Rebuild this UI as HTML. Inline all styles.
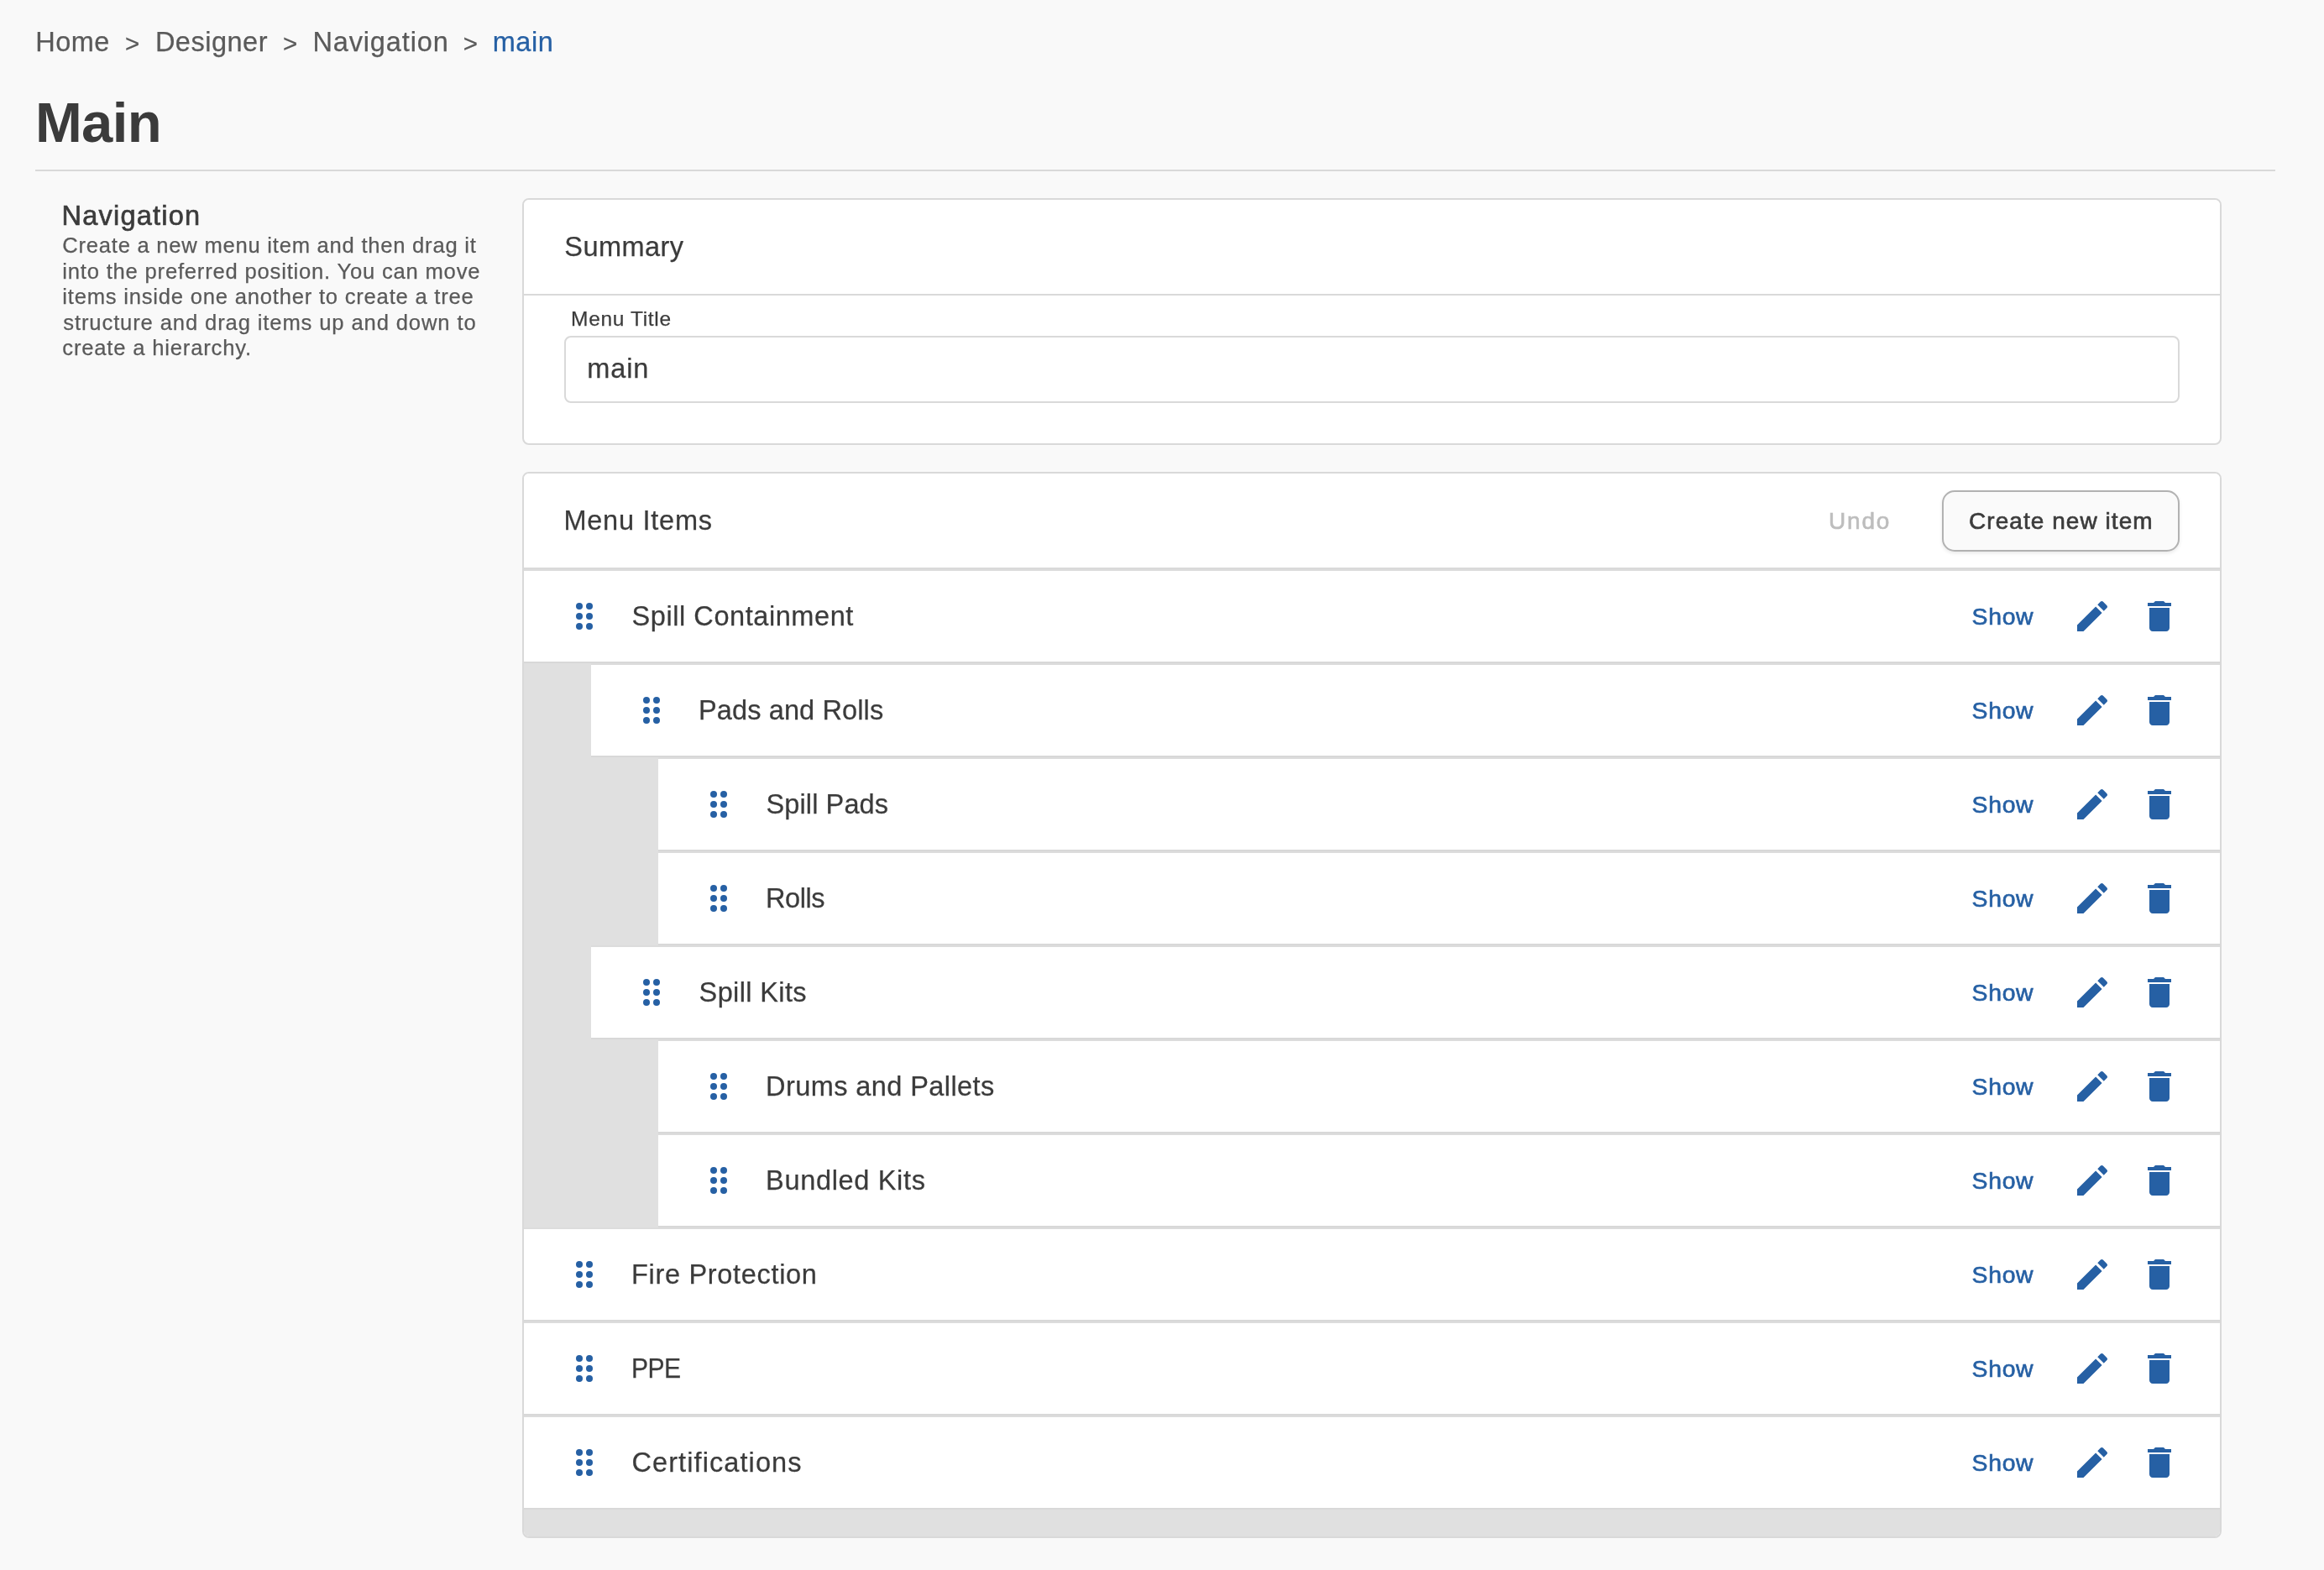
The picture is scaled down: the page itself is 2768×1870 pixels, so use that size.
<!DOCTYPE html>
<html lang="en">
<head>
<meta charset="utf-8">
<title>Main - Navigation</title>
<style>
*{box-sizing:border-box;margin:0;padding:0}
html,body{width:2768px;height:1870px;overflow:hidden;background:#f9f9f9}
body{position:relative;font-family:"Liberation Sans",Arial,sans-serif;color:#3b3b3b;-webkit-font-smoothing:antialiased;-webkit-text-stroke:0.25px currentColor}
#page{position:absolute;left:0;top:0;width:2768px;height:1870px;will-change:transform}
.abs{position:absolute;white-space:nowrap}
.med{-webkit-text-stroke:0.65px currentColor}

/* breadcrumb */
.crumbs{left:42px;top:26px;height:48px;line-height:48px;font-size:32.5px;color:#5a5a5a;letter-spacing:0.9px}
.crumbs span{position:absolute;top:0}
.crumbs .cur{color:#2660a4}
.crumbs .sep{letter-spacing:0;font-size:29.5px;top:1.8px}

h1.title{-webkit-text-stroke:0;left:42px;top:104.3px;font-size:67px;line-height:84px;font-weight:700;color:#3b3b3b;letter-spacing:0.4px}
.rule{position:absolute;left:42px;top:202px;width:2668px;height:2px;background:#d9d9d9}

/* sidebar */
.side-title{left:74px;top:238px;font-size:32.5px;line-height:38px;color:#3b3b3b;letter-spacing:1px}
.side-desc{position:absolute;left:74px;top:277.3px;width:520px;font-size:25.6px;line-height:30.5px;color:#5a5a5a;letter-spacing:0.75px}
.side-desc span{display:block;position:relative;white-space:nowrap}

/* cards */
.card{position:absolute;left:622px;width:2024px;background:#fff;border:2px solid #d9d9d9;border-radius:8px;overflow:hidden}
.card1{top:236px;height:294px}
.card2{top:562px;height:1270px}
.card-head{position:relative;height:114px;border-bottom:2px solid #d9d9d9;background:#fff}
.card-head .h{left:48px;top:36px;font-size:32.5px;line-height:40px;color:#3b3b3b;letter-spacing:1px}
.label{left:57px;top:127px;font-size:24.5px;line-height:30px;color:#3b3b3b;letter-spacing:0.7px}
.input{position:absolute;left:48px;top:162px;width:1924px;height:80px;border:2px solid #d9d9d9;border-radius:8px;background:#fff}
.input span{position:absolute;left:26px;top:17px;font-size:32.5px;line-height:40px;color:#3b3b3b;letter-spacing:1px}

.undo{left:1556px;top:36.7px;font-size:28px;line-height:40px;color:#bdbdbd;letter-spacing:0.8px}
.btn{position:absolute;left:1689px;top:20px;width:283px;height:73px;border:2px solid #b2b2b2;border-radius:15px;background:#fafafa;box-shadow:0 2px 4px rgba(0,0,0,.09)}
.btn span{position:absolute;top:14.5px;font-size:28px;line-height:40px;color:#3b3b3b;letter-spacing:0.8px}

/* tree */
.tree{position:relative;background:#e0e0e0;padding-bottom:32px}
.item{position:relative;height:112px;background:#fff;border-top:2px solid #dcdcdc;border-bottom:2px solid #d8d8d8}
.l1{margin-left:0}
.l2{margin-left:80px}
.l3{margin-left:160px}
.item svg{position:absolute;top:30px;width:48px;height:48px;fill:#2660a4}
.item .drag{left:48px}
.item .name{left:128px;top:32px;font-size:32.5px;line-height:44px;color:#3b3b3b;letter-spacing:1px}
.item .grp{position:absolute;right:0;top:0;width:400px;height:108px}
.item .show{top:34.3px;font-size:28.4px;line-height:40px;color:#2660a4;letter-spacing:0.8px}
.item .edit{left:224px}
.item .del{left:304px}
#c1{left:0.3px;letter-spacing:0.467px}
#s1{left:107px;letter-spacing:0px}
#c2{left:142.9px;letter-spacing:0.5px}
#s2{left:294.9px;letter-spacing:0px}
#c3{left:330.4px;letter-spacing:0.867px}
#s3{left:509.8px;letter-spacing:0px}
#c4{left:544.7px;letter-spacing:0.533px}
#h1{left:41.9px;letter-spacing:-0.6px}
#st{left:73.6px;letter-spacing:1.222px}
#d1{left:0.3px;letter-spacing:0.755px}
#d2{left:0.3px;letter-spacing:0.798px}
#d3{left:0.3px;letter-spacing:0.785px}
#d4{left:1.3px;letter-spacing:0.874px}
#d5{left:0.3px;letter-spacing:0.817px}
#hs{left:48.3px;letter-spacing:0.45px}
#hm{left:47.4px;letter-spacing:0.756px}
#lb{left:56.1px;letter-spacing:0.656px}
#iv{left:25.2px;letter-spacing:0.9px}
#un{left:1554px;letter-spacing:1.8px}
#bt{left:30px;letter-spacing:1.057px}
.item .show{left:104.6px;letter-spacing:0.667px}
#n1{left:128.5px;letter-spacing:0.569px}
#n2{left:128px;letter-spacing:0.123px}
#n3{left:128.5px;letter-spacing:0.111px}
#n4{left:128.1px;letter-spacing:-0.45px}
#n5{left:128.6px;letter-spacing:0.378px}
#n6{left:128.1px;letter-spacing:0.413px}
#n7{left:128.1px;letter-spacing:0.664px}
#n8{left:128px;letter-spacing:0.686px}
#n9{left:128px;letter-spacing:-0.6px}
#n10{left:128.4px;letter-spacing:1.1px}
#n9{transform:scaleX(0.925);transform-origin:0 50%}
</style>
</head>
<body>
<div id="page">

<div class="abs crumbs">
  <span id="c1">Home</span>
  <span class="sep" id="s1">&gt;</span>
  <span id="c2">Designer</span>
  <span class="sep" id="s2">&gt;</span>
  <span id="c3">Navigation</span>
  <span class="sep" id="s3">&gt;</span>
  <span class="cur" id="c4">main</span>
</div>

<h1 class="abs title" id="h1">Main</h1>
<div class="rule"></div>

<div class="abs side-title med" id="st">Navigation</div>
<div class="side-desc">
  <span id="d1">Create a new menu item and then drag it</span>
  <span id="d2">into the preferred position. You can move</span>
  <span id="d3">items inside one another to create a tree</span>
  <span id="d4">structure and drag items up and down to</span>
  <span id="d5">create a hierarchy.</span>
</div>

<div class="card card1">
  <div class="card-head"><div class="abs h" id="hs">Summary</div></div>
  <div class="abs label" id="lb">Menu Title</div>
  <div class="input"><span class="abs" id="iv">main</span></div>
</div>

<div class="card card2">
  <div class="card-head">
    <div class="abs h" id="hm">Menu Items</div>
    <div class="abs undo med" id="un">Undo</div>
    <div class="btn"><span class="abs med" id="bt">Create new item</span></div>
  </div>
  <div class="tree" id="tree">
    <div class="item l1"><svg class="drag" viewBox="0 0 24 24"><circle cx="9" cy="6" r="2"/><circle cx="15" cy="6" r="2"/><circle cx="9" cy="12" r="2"/><circle cx="15" cy="12" r="2"/><circle cx="9" cy="18" r="2"/><circle cx="15" cy="18" r="2"/></svg><div class="abs name" id="n1">Spill Containment</div><div class="grp"><div class="abs show med" id="sh1">Show</div><svg class="edit" viewBox="0 0 24 24"><path d="M3 17.25V21h3.75L17.81 9.94l-3.75-3.75L3 17.25zM20.71 7.04c.39-.39.39-1.02 0-1.41l-2.34-2.34c-.39-.39-1.02-.39-1.41 0l-1.83 1.83 3.75 3.75 1.83-1.83z"/></svg><svg class="del" viewBox="0 0 24 24"><path d="M6 19c0 1.1.9 2 2 2h8c1.1 0 2-.9 2-2V7H6v12zM19 4h-3.5l-1-1h-5l-1 1H5v2h14V4z"/></svg></div></div>
    <div class="item l2"><svg class="drag" viewBox="0 0 24 24"><circle cx="9" cy="6" r="2"/><circle cx="15" cy="6" r="2"/><circle cx="9" cy="12" r="2"/><circle cx="15" cy="12" r="2"/><circle cx="9" cy="18" r="2"/><circle cx="15" cy="18" r="2"/></svg><div class="abs name" id="n2">Pads and Rolls</div><div class="grp"><div class="abs show med" id="sh2">Show</div><svg class="edit" viewBox="0 0 24 24"><path d="M3 17.25V21h3.75L17.81 9.94l-3.75-3.75L3 17.25zM20.71 7.04c.39-.39.39-1.02 0-1.41l-2.34-2.34c-.39-.39-1.02-.39-1.41 0l-1.83 1.83 3.75 3.75 1.83-1.83z"/></svg><svg class="del" viewBox="0 0 24 24"><path d="M6 19c0 1.1.9 2 2 2h8c1.1 0 2-.9 2-2V7H6v12zM19 4h-3.5l-1-1h-5l-1 1H5v2h14V4z"/></svg></div></div>
    <div class="item l3"><svg class="drag" viewBox="0 0 24 24"><circle cx="9" cy="6" r="2"/><circle cx="15" cy="6" r="2"/><circle cx="9" cy="12" r="2"/><circle cx="15" cy="12" r="2"/><circle cx="9" cy="18" r="2"/><circle cx="15" cy="18" r="2"/></svg><div class="abs name" id="n3">Spill Pads</div><div class="grp"><div class="abs show med" id="sh3">Show</div><svg class="edit" viewBox="0 0 24 24"><path d="M3 17.25V21h3.75L17.81 9.94l-3.75-3.75L3 17.25zM20.71 7.04c.39-.39.39-1.02 0-1.41l-2.34-2.34c-.39-.39-1.02-.39-1.41 0l-1.83 1.83 3.75 3.75 1.83-1.83z"/></svg><svg class="del" viewBox="0 0 24 24"><path d="M6 19c0 1.1.9 2 2 2h8c1.1 0 2-.9 2-2V7H6v12zM19 4h-3.5l-1-1h-5l-1 1H5v2h14V4z"/></svg></div></div>
    <div class="item l3"><svg class="drag" viewBox="0 0 24 24"><circle cx="9" cy="6" r="2"/><circle cx="15" cy="6" r="2"/><circle cx="9" cy="12" r="2"/><circle cx="15" cy="12" r="2"/><circle cx="9" cy="18" r="2"/><circle cx="15" cy="18" r="2"/></svg><div class="abs name" id="n4">Rolls</div><div class="grp"><div class="abs show med" id="sh4">Show</div><svg class="edit" viewBox="0 0 24 24"><path d="M3 17.25V21h3.75L17.81 9.94l-3.75-3.75L3 17.25zM20.71 7.04c.39-.39.39-1.02 0-1.41l-2.34-2.34c-.39-.39-1.02-.39-1.41 0l-1.83 1.83 3.75 3.75 1.83-1.83z"/></svg><svg class="del" viewBox="0 0 24 24"><path d="M6 19c0 1.1.9 2 2 2h8c1.1 0 2-.9 2-2V7H6v12zM19 4h-3.5l-1-1h-5l-1 1H5v2h14V4z"/></svg></div></div>
    <div class="item l2"><svg class="drag" viewBox="0 0 24 24"><circle cx="9" cy="6" r="2"/><circle cx="15" cy="6" r="2"/><circle cx="9" cy="12" r="2"/><circle cx="15" cy="12" r="2"/><circle cx="9" cy="18" r="2"/><circle cx="15" cy="18" r="2"/></svg><div class="abs name" id="n5">Spill Kits</div><div class="grp"><div class="abs show med" id="sh5">Show</div><svg class="edit" viewBox="0 0 24 24"><path d="M3 17.25V21h3.75L17.81 9.94l-3.75-3.75L3 17.25zM20.71 7.04c.39-.39.39-1.02 0-1.41l-2.34-2.34c-.39-.39-1.02-.39-1.41 0l-1.83 1.83 3.75 3.75 1.83-1.83z"/></svg><svg class="del" viewBox="0 0 24 24"><path d="M6 19c0 1.1.9 2 2 2h8c1.1 0 2-.9 2-2V7H6v12zM19 4h-3.5l-1-1h-5l-1 1H5v2h14V4z"/></svg></div></div>
    <div class="item l3"><svg class="drag" viewBox="0 0 24 24"><circle cx="9" cy="6" r="2"/><circle cx="15" cy="6" r="2"/><circle cx="9" cy="12" r="2"/><circle cx="15" cy="12" r="2"/><circle cx="9" cy="18" r="2"/><circle cx="15" cy="18" r="2"/></svg><div class="abs name" id="n6">Drums and Pallets</div><div class="grp"><div class="abs show med" id="sh6">Show</div><svg class="edit" viewBox="0 0 24 24"><path d="M3 17.25V21h3.75L17.81 9.94l-3.75-3.75L3 17.25zM20.71 7.04c.39-.39.39-1.02 0-1.41l-2.34-2.34c-.39-.39-1.02-.39-1.41 0l-1.83 1.83 3.75 3.75 1.83-1.83z"/></svg><svg class="del" viewBox="0 0 24 24"><path d="M6 19c0 1.1.9 2 2 2h8c1.1 0 2-.9 2-2V7H6v12zM19 4h-3.5l-1-1h-5l-1 1H5v2h14V4z"/></svg></div></div>
    <div class="item l3"><svg class="drag" viewBox="0 0 24 24"><circle cx="9" cy="6" r="2"/><circle cx="15" cy="6" r="2"/><circle cx="9" cy="12" r="2"/><circle cx="15" cy="12" r="2"/><circle cx="9" cy="18" r="2"/><circle cx="15" cy="18" r="2"/></svg><div class="abs name" id="n7">Bundled Kits</div><div class="grp"><div class="abs show med" id="sh7">Show</div><svg class="edit" viewBox="0 0 24 24"><path d="M3 17.25V21h3.75L17.81 9.94l-3.75-3.75L3 17.25zM20.71 7.04c.39-.39.39-1.02 0-1.41l-2.34-2.34c-.39-.39-1.02-.39-1.41 0l-1.83 1.83 3.75 3.75 1.83-1.83z"/></svg><svg class="del" viewBox="0 0 24 24"><path d="M6 19c0 1.1.9 2 2 2h8c1.1 0 2-.9 2-2V7H6v12zM19 4h-3.5l-1-1h-5l-1 1H5v2h14V4z"/></svg></div></div>
    <div class="item l1"><svg class="drag" viewBox="0 0 24 24"><circle cx="9" cy="6" r="2"/><circle cx="15" cy="6" r="2"/><circle cx="9" cy="12" r="2"/><circle cx="15" cy="12" r="2"/><circle cx="9" cy="18" r="2"/><circle cx="15" cy="18" r="2"/></svg><div class="abs name" id="n8">Fire Protection</div><div class="grp"><div class="abs show med" id="sh8">Show</div><svg class="edit" viewBox="0 0 24 24"><path d="M3 17.25V21h3.75L17.81 9.94l-3.75-3.75L3 17.25zM20.71 7.04c.39-.39.39-1.02 0-1.41l-2.34-2.34c-.39-.39-1.02-.39-1.41 0l-1.83 1.83 3.75 3.75 1.83-1.83z"/></svg><svg class="del" viewBox="0 0 24 24"><path d="M6 19c0 1.1.9 2 2 2h8c1.1 0 2-.9 2-2V7H6v12zM19 4h-3.5l-1-1h-5l-1 1H5v2h14V4z"/></svg></div></div>
    <div class="item l1"><svg class="drag" viewBox="0 0 24 24"><circle cx="9" cy="6" r="2"/><circle cx="15" cy="6" r="2"/><circle cx="9" cy="12" r="2"/><circle cx="15" cy="12" r="2"/><circle cx="9" cy="18" r="2"/><circle cx="15" cy="18" r="2"/></svg><div class="abs name" id="n9">PPE</div><div class="grp"><div class="abs show med" id="sh9">Show</div><svg class="edit" viewBox="0 0 24 24"><path d="M3 17.25V21h3.75L17.81 9.94l-3.75-3.75L3 17.25zM20.71 7.04c.39-.39.39-1.02 0-1.41l-2.34-2.34c-.39-.39-1.02-.39-1.41 0l-1.83 1.83 3.75 3.75 1.83-1.83z"/></svg><svg class="del" viewBox="0 0 24 24"><path d="M6 19c0 1.1.9 2 2 2h8c1.1 0 2-.9 2-2V7H6v12zM19 4h-3.5l-1-1h-5l-1 1H5v2h14V4z"/></svg></div></div>
    <div class="item l1"><svg class="drag" viewBox="0 0 24 24"><circle cx="9" cy="6" r="2"/><circle cx="15" cy="6" r="2"/><circle cx="9" cy="12" r="2"/><circle cx="15" cy="12" r="2"/><circle cx="9" cy="18" r="2"/><circle cx="15" cy="18" r="2"/></svg><div class="abs name" id="n10">Certifications</div><div class="grp"><div class="abs show med" id="sh10">Show</div><svg class="edit" viewBox="0 0 24 24"><path d="M3 17.25V21h3.75L17.81 9.94l-3.75-3.75L3 17.25zM20.71 7.04c.39-.39.39-1.02 0-1.41l-2.34-2.34c-.39-.39-1.02-.39-1.41 0l-1.83 1.83 3.75 3.75 1.83-1.83z"/></svg><svg class="del" viewBox="0 0 24 24"><path d="M6 19c0 1.1.9 2 2 2h8c1.1 0 2-.9 2-2V7H6v12zM19 4h-3.5l-1-1h-5l-1 1H5v2h14V4z"/></svg></div></div>
  </div>
</div>

</div>
</body>
</html>
